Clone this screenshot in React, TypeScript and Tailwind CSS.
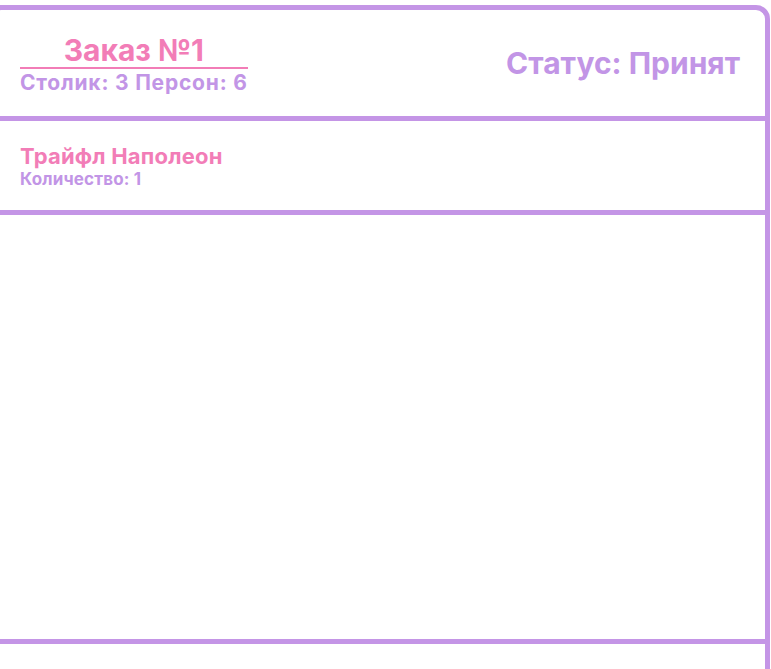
export default function App() {
  return (
    <div className="min-h-screen bg-white pt-[5px] overflow-hidden" style={{ fontFamily: "Inter, 'Noto Sans', sans-serif" }}>
      <div className="-ml-[5px] w-[775px] border-[5px] border-b-0 border-[#c495e6] rounded-tr-[14px] rounded-tl-[6px]">
        {/* header */}
        <div className="h-[111px] border-b-[5px] border-[#c495e6] flex items-center justify-between pl-[20px] pr-[25px]">
          <div className="flex flex-col pt-[3px]">
            <div className="text-center text-[30px] leading-[34px] font-bold text-[#f27db7] border-b-2 border-[#f27db7]">
              Заказ №1
            </div>
            <div className="text-[21px] leading-[26px] tracking-[0.8px] font-bold text-[#c295e6] mt-[1px]">
              Столик: 3 Персон: 6
            </div>
          </div>
          <div className="text-[30px] font-bold text-[#c295e6]">Статус: Принят</div>
        </div>

        {/* items */}
        <div className="h-[94px] border-b-[5px] border-[#c495e6] flex flex-col justify-center pl-[20px]">
          <div className="text-[22px] leading-[26px] tracking-[0.2px] font-bold text-[#f27db7]">Трайфл Наполеон</div>
          <div className="text-[17px] leading-[20px] tracking-[0.15px] font-bold text-[#c295e6]">Количество: 1</div>
        </div>

        <div className="h-[429px] border-b-[5px] border-[#c495e6]" />
        <div className="h-[40px]" />
      </div>
    </div>
  );
}
